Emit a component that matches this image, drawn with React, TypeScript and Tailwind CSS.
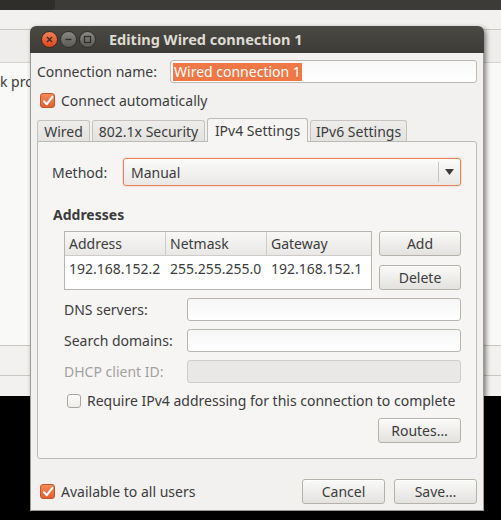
import React from "react";

const FONT = { fontFamily: '"Noto Sans", "DejaVu Sans", sans-serif' };

function CheckBox({ checked }: { checked: boolean }) {
  if (!checked) {
    return (
      <span className="inline-block w-[14px] h-[14px] rounded-[3px] border border-[#a8a5a0] bg-gradient-to-b from-[#fbfbfa] to-[#eeedec] shrink-0" />
    );
  }
  return (
    <span className="inline-flex items-center justify-center w-[15px] h-[15px] rounded-[3px] border border-[#c2552a] bg-gradient-to-b from-[#f48a5a] to-[#e2602f] shrink-0">
      <svg width="12" height="12" viewBox="0 0 12 12">
        <path d="M2 6.2 L4.8 9.2 L10.4 1.8" fill="none" stroke="#ffffff" strokeWidth="2" strokeLinecap="round" strokeLinejoin="round" />
      </svg>
    </span>
  );
}

function Button({ label, className = "" }: { label: string; className?: string }) {
  return (
    <div
      className={`flex items-center justify-center rounded-[3px] border border-[#b5b2ac] bg-gradient-to-b from-[#fafaf9] to-[#e4e2df] text-[#3c3c3c] shadow-[inset_0_1px_0_#ffffff] ${className}`}
    >
      {label}
    </div>
  );
}

function Entry({ disabled = false }: { disabled?: boolean }) {
  return (
    <div
      className={`h-[23px] flex-1 rounded-[3px] border ${
        disabled
          ? "border-[#cfcdca] bg-[#e9e8e6]"
          : "border-[#b8b5b0] bg-gradient-to-b from-[#f6f6f6] to-[#ffffff]"
      }`}
    />
  );
}

function Tab({ label, active = false, w }: { label: string; active?: boolean; w: string }) {
  if (active) {
    return (
      <div className={`${w} h-[24px] -mb-px flex items-center justify-center rounded-t-[3px] border border-b-0 border-[#bdbab5] bg-[#f6f5f4] text-[#3c3c3c] relative z-10`}>
        {label}
      </div>
    );
  }
  return (
    <div className={`${w} h-[21px] flex items-center justify-center rounded-t-[3px] border border-b-0 border-[#c6c3be] bg-gradient-to-b from-[#eeedeb] to-[#e3e2df] text-[#3c3c3c]`}>
      {label}
    </div>
  );
}

function WindowButton({ kind }: { kind: "close" | "min" | "max" }) {
  const base =
    kind === "close"
      ? "bg-gradient-to-b from-[#f57f55] to-[#d9441b] border-[#3a2a22]"
      : "bg-gradient-to-b from-[#8a8883] to-[#5c5a55] border-[#2f2e2a]";
  return (
    <div className={`w-[17px] h-[17px] rounded-full border flex items-center justify-center ${base}`}>
      <svg width="9" height="9" viewBox="0 0 9 9">
        {kind === "close" && (
          <path d="M2 2 L7 7 M7 2 L2 7" stroke="#3c2a22" strokeWidth="1.4" />
        )}
        {kind === "min" && <path d="M1.5 4.5 H7.5" stroke="#2f2e2a" strokeWidth="1.4" />}
        {kind === "max" && <rect x="1.5" y="1.5" width="6" height="6" fill="none" stroke="#2f2e2a" strokeWidth="1.2" />}
      </svg>
    </div>
  );
}

export default function App() {
  return (
    <div className="relative w-[501px] h-[520px] overflow-hidden bg-black text-[14px] text-[#3c3c3c]" style={FONT}>
      {/* Desktop: background window */}
      <div className="flex flex-col w-full h-[396px]">
        <div className="h-[10px] bg-[#3c3b37] flex">
          <div className="w-[55px] h-full bg-[#2f2e2b] rounded-br-[4px]" />
        </div>
        <div className="flex-1 bg-[#f2f1f0] flex flex-col">
          <div className="h-[20px] border-b border-[#c9c6c1]" />
          <div className="h-[33px] bg-[#eeedec] border-b border-[#d6d3ce]" />
          <div className="flex-1 bg-[#f9f9f8]">
            <div className="pt-[8px] text-[#3c3c3c]">k pro</div>
          </div>
          <div className="h-[31px] border-t border-[#c9c6c1] border-b bg-[#f2f1f0]" />
          <div className="h-[20px]" />
        </div>
      </div>

      {/* Dialog window */}
      <div className="absolute left-[30px] top-[26px] w-[454px] h-[485px] flex flex-col rounded-t-[6px] shadow-[2px_2px_5px_rgba(0,0,0,0.5)]">
        {/* Title bar */}
        <div className="h-[27px] shrink-0 rounded-t-[6px] bg-gradient-to-b from-[#4a4944] to-[#3c3b37] flex items-center pl-[11px]">
          <div className="flex gap-[2px]">
            <WindowButton kind="close" />
            <WindowButton kind="min" />
            <WindowButton kind="max" />
          </div>
          <div className="ml-[13px] font-bold text-[#dfdbd2] text-[14.5px]">Editing Wired connection 1</div>
        </div>

        {/* Body */}
        <div className="flex-1 bg-[#f2f1f0] flex flex-col px-[6px] border-l border-r border-b border-[#9e9b96]">
          <div className="flex items-center mt-[7px] h-[23px]">
            <span className="w-[133px]">Connection name:</span>
            <div className="flex-1 h-[23px] rounded-[3px] border border-[#bdbab5] bg-gradient-to-b from-[#f8f8f8] to-[#ffffff] flex items-center pl-[2px]">
              <span className="bg-[#f07746] text-white px-[1px] leading-[18px]">Wired connection 1</span>
            </div>
          </div>

          <div className="flex items-center gap-[6px] mt-[7px] pl-[3px]">
            <CheckBox checked />
            <span>Connect automatically</span>
          </div>

          {/* Tabs */}
          <div className="flex items-end gap-[2px] mt-[6px] h-[24px] relative">
            <Tab label="Wired" w="w-[53px]" />
            <Tab label="802.1x Security" w="w-[113px]" />
            <Tab label="IPv4 Settings" active w="w-[101px]" />
            <Tab label="IPv6 Settings" w="w-[97px]" />
          </div>

          <div className="h-[318px] border border-[#bdbab5] rounded-b-[3px] rounded-tr-[3px] bg-[#f6f5f4] flex flex-col">
            <div className="flex items-center mt-[16px] pl-[14px] pr-[15px]">
              <span className="w-[71px]">Method:</span>
              <div className="flex-1 h-[28px] rounded-[3px] border border-[#e9835a] bg-gradient-to-b from-[#fbfbfa] to-[#e9e8e6] flex items-center shadow-[0_0_0_1px_rgba(240,119,70,0.15)]">
                <span className="flex-1 pl-[7px]">Manual</span>
                <div className="w-[22px] h-[20px] border-l border-[#c9c6c1] flex items-center justify-center">
                  <svg width="9" height="6" viewBox="0 0 9 6">
                    <path d="M0 0 H9 L4.5 6 Z" fill="#3c3c3c" />
                  </svg>
                </div>
              </div>
            </div>

            <div className="mt-[18px] pl-[15px] font-bold">Addresses</div>

            <div className="flex mt-[6px] pl-[26px] pr-[15px] gap-[7px]">
              <div className="w-[308px] h-[59px] border border-[#b8b5b0] bg-white flex flex-col">
                <div className="flex h-[24px] bg-gradient-to-b from-[#f8f7f6] to-[#e9e8e6] border-b border-[#cfccc7]">
                  <div className="w-[101px] pl-[4px] flex items-center border-r border-[#cfccc7]">Address</div>
                  <div className="w-[101px] pl-[4px] flex items-center border-r border-[#cfccc7]">Netmask</div>
                  <div className="flex-1 pl-[4px] flex items-center">Gateway</div>
                </div>
                <div className="flex h-[24px] items-center">
                  <div className="w-[101px] pl-[4px]">192.168.152.2</div>
                  <div className="w-[101px] pl-[4px]">255.255.255.0</div>
                  <div className="flex-1 pl-[4px]">192.168.152.1</div>
                </div>
              </div>
              <div className="flex flex-col gap-[9px] flex-1">
                <Button label="Add" className="h-[25px]" />
                <Button label="Delete" className="h-[25px]" />
              </div>
            </div>

            <div className="flex flex-col gap-[8px] mt-[8px] pl-[26px] pr-[15px]">
              <div className="flex items-center">
                <span className="w-[123px]">DNS servers:</span>
                <Entry />
              </div>
              <div className="flex items-center">
                <span className="w-[123px]">Search domains:</span>
                <Entry />
              </div>
              <div className="flex items-center">
                <span className="w-[123px] text-[#a3a19e]">DHCP client ID:</span>
                <Entry disabled />
              </div>
            </div>

            <div className="flex items-center gap-[6px] mt-[7px] pl-[29px]">
              <CheckBox checked={false} />
              <span>Require IPv4 addressing for this connection to complete</span>
            </div>

            <div className="flex justify-end mt-[7px] pr-[15px]">
              <Button label="Routes…" className="w-[83px] h-[25px]" />
            </div>
          </div>

          <div className="flex items-center mt-[20px] pl-[3px]">
            <div className="flex items-center gap-[6px] flex-1">
              <CheckBox checked />
              <span>Available to all users</span>
            </div>
            <Button label="Cancel" className="w-[83px] h-[25px]" />
            <Button label="Save…" className="w-[83px] h-[25px] ml-[9px]" />
          </div>
        </div>
      </div>
    </div>
  );
}
